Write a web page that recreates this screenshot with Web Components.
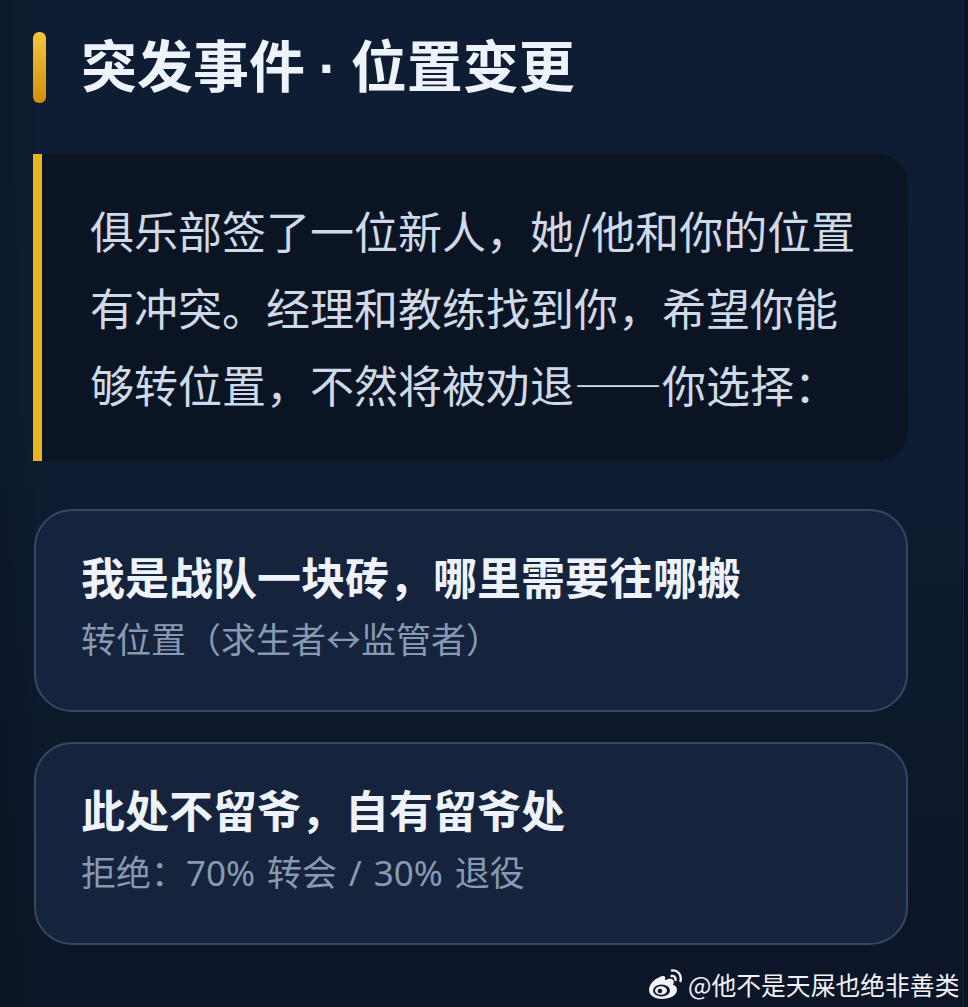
<!DOCTYPE html>
<html lang="zh">
<head>
<meta charset="utf-8">
<title>突发事件</title>
<style>
  html, body { margin: 0; height: 100%; background: #0d1628; }
  body { font-family: "Noto Sans CJK SC", "Noto Sans", sans-serif; }
</style>
</head>
<body>
<event-page>
  <event-title>突发事件 · 位置变更</event-title>
  <event-quote>俱乐部签了一位新人，她/他和你的位置<br>有冲突。经理和教练找到你，希望你能<br>够转位置，不然将被劝退——你选择：</event-quote>
  <choice-card>
    我是战队一块砖，哪里需要往哪搬
    <span slot="sub">转位置（求生者↔监管者）</span>
  </choice-card>
  <choice-card>
    此处不留爷，自有留爷处
    <span slot="sub">拒绝：70% 转会 / 30% 退役</span>
  </choice-card>
  <weibo-mark>@他不是天屎也绝非善类</weibo-mark>
</event-page>
<script>
class EventPage extends HTMLElement {
  constructor() {
    super()
    this.attachShadow({ mode: 'open' }).innerHTML = `
      <style>
        :host {
          display: block;
          position: relative;
          box-sizing: border-box;
          width: 968px;
          height: 1007px;
          overflow: hidden;
          padding: 32px 60px 0 33px;
          background:
            linear-gradient(90deg, rgba(8,14,28,.3) 0, rgba(8,14,28,0) 40px),
            linear-gradient(180deg, #0e1d33 0, #0e1c32 40%, #0d182b 75%, #0d1628 100%);
        }
        .edge {
          position: absolute;
          top: 0;
          right: 0;
          bottom: 0;
          width: 5px;
          background: #0b1322;
          border-left: 1px solid #172438;
          box-sizing: border-box;
        }
      </style>
      <slot></slot>
      <div class="edge"></div>
    `
  }
}

class EventTitle extends HTMLElement {
  constructor() {
    super()
    this.attachShadow({ mode: 'open' }).innerHTML = `
      <style>
        :host {
          display: flex;
          align-items: center;
          gap: 35px;
          height: 71px;
          color: #eef2fb;
          font-family: "Liberation Sans", "Noto Sans CJK SC", sans-serif;
          font-size: 56px;
          font-weight: 700;
          line-height: 71px;
          word-spacing: -2px;
          white-space: nowrap;
        }
        .bar {
          flex: none;
          width: 13px;
          height: 71px;
          border-radius: 6px;
          background: linear-gradient(180deg, #f5c53f 0, #d08f0b 100%);
        }
        .text { margin-top: -1px; }
      </style>
      <div class="bar"></div>
      <div class="text"><slot></slot></div>
    `
  }
}

class EventQuote extends HTMLElement {
  constructor() {
    super()
    this.attachShadow({ mode: 'open' }).innerHTML = `
      <style>
        :host {
          display: block;
          box-sizing: border-box;
          width: 875px;
          height: 307px;
          margin-top: 51px;
          padding: 38px 0 0 48px;
          border-left: 9px solid #e9b41c;
          border-radius: 0 30px 30px 0;
          background: #0b1423;
          color: #d0d9e8;
          font-size: 44px;
          font-weight: 400;
          line-height: 77px;
          white-space: nowrap;
        }
      </style>
      <slot></slot>
    `
  }
}

class ChoiceCard extends HTMLElement {
  constructor() {
    super()
    this.attachShadow({ mode: 'open' }).innerHTML = `
      <style>
        :host {
          display: block;
          box-sizing: border-box;
          width: 874px;
          height: 203px;
          margin: 48px 0 0 1px;
          padding: 34px 0 0 45px;
          border: 2px solid #37475f;
          border-radius: 38px;
          background: #15243c;
          white-space: nowrap;
        }
        :host(:last-of-type) { margin-top: 30px; }
        .main {
          color: #eef2fb;
          font-size: 44px;
          font-weight: 700;
          line-height: 62px;
        }
        .sub {
          color: #8899b4;
          font-family: "Noto Sans", "Noto Sans CJK SC", sans-serif;
          font-size: 35px;
          line-height: 50px;
          margin-top: 8px;
          word-spacing: 2.75px;
        }
      </style>
      <div class="main"><slot></slot></div>
      <div class="sub"><slot name="sub"></slot></div>
    `
  }
}

class WeiboMark extends HTMLElement {
  constructor() {
    super()
    this.attachShadow({ mode: 'open' }).innerHTML = `
      <style>
        :host {
          position: absolute;
          left: 648px;
          top: 966px;
          display: flex;
          align-items: center;
          gap: 4px;
          color: #f1f3f6;
          font-size: 24.800px;
          line-height: 36px;
          white-space: nowrap;
        }
        svg { flex: none; display: block; }
      </style>
      <svg width="36" height="32" viewBox="0 0 36 32">
        <path fill="#f1f3f6" d="M15 8C9 9 1 15 1 22c0 6 7 9 13 9 8 0 15-4 15-9 0-3-2-5-4-5 1-2 1-4 0-5-2-2-5-1-7 0-1 0-1 0-1-1 1-3-1-3-2-3z"/>
        <ellipse cx="13.500" cy="22.500" rx="8.500" ry="6" fill="#0c1729"/>
        <ellipse cx="13" cy="22.500" rx="6" ry="4.300" fill="#f1f3f6"/>
        <circle cx="12" cy="23" r="2.300" fill="#0c1729"/>
        <path fill="none" stroke="#f1f3f6" stroke-width="2.400" stroke-linecap="round" d="M24 2.500c5-1 10 4 8.500 10.500M23.500 8c2.500-.5 4.500 1.500 4 4"/>
      </svg>
      <span><slot></slot></span>
    `
  }
}

customElements.define('event-page', EventPage)
customElements.define('event-title', EventTitle)
customElements.define('event-quote', EventQuote)
customElements.define('choice-card', ChoiceCard)
customElements.define('weibo-mark', WeiboMark)
</script>
</body>
</html>
